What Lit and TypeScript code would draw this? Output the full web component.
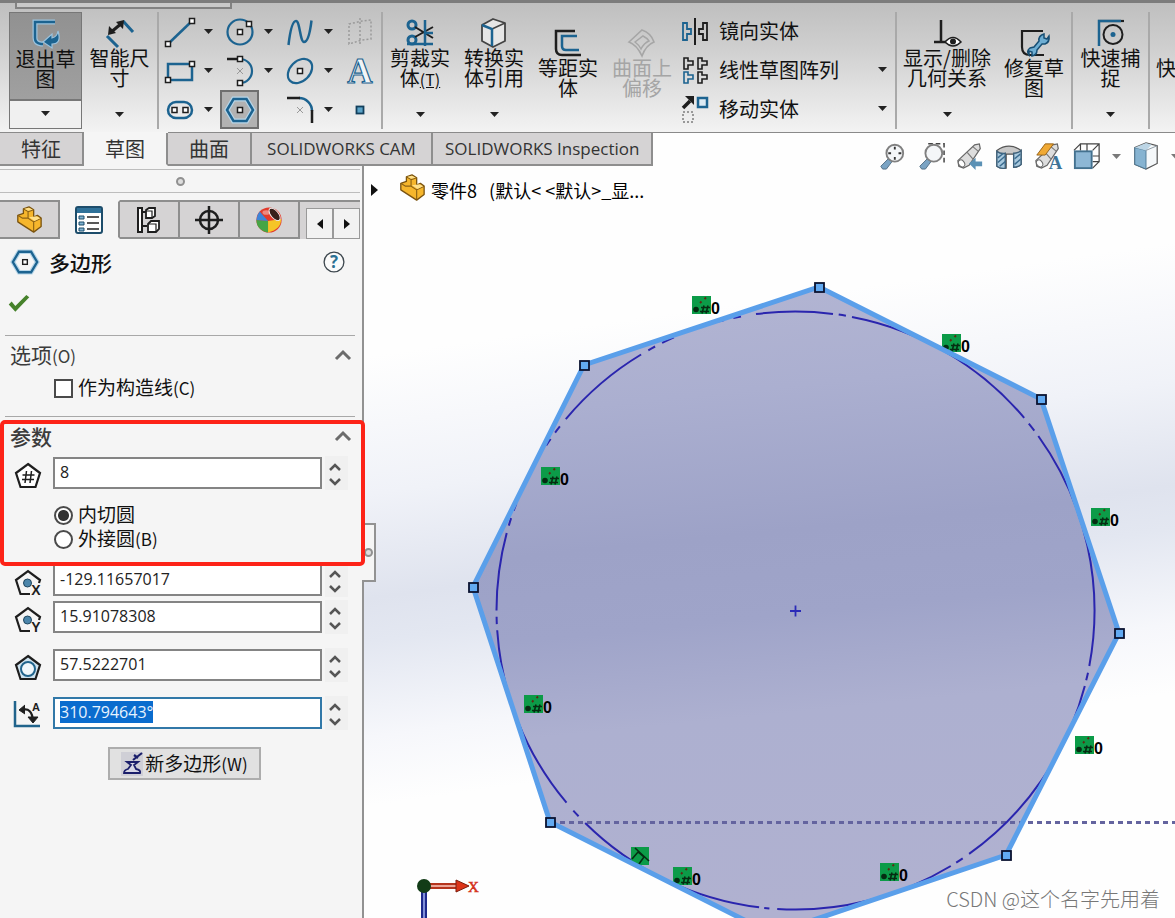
import { LitElement, html, svg, css, nothing, TemplateResult, SVGTemplateResult } from "lit";
import { customElement, state } from "lit/decorators.js";
import { classMap } from "lit/directives/class-map.js";

const BLUE = "#1c6390";
const INK = "#1e1e1e";

/** Small square grip used all over the sketch icons. */
const grip = (x: number, y: number) =>
  svg`<rect x=${x - 2.5} y=${y - 2.5} width="5" height="5" fill="#fff" stroke=${INK} stroke-width="1.5"/>`;

const cross = svg`<path d="M12 12l6 6M18 12l-6 6" stroke="#999" stroke-width="1"/>`;

/** Magnifier handle and lens shared by the zoom icons. */
const lens = svg`
  <path d="M11 18L3 26l2 3 4 0 6-8z" fill="#7ba4c4" stroke="#4f6c82"/>
  <circle cx="18" cy="12" r="9" fill="#f4f6f8" stroke="#808080" stroke-width="2"/>`;

const telescope = svg`
  <path d="M2 20L20 3l5-1 1 5-12 18-6 3-5-2z" fill="#ddd" stroke="#666" stroke-width="1.3"/>
  <path d="M12 11l6 7M18 5l6 5" stroke="#777" stroke-width="1.2"/>
  <ellipse cx="6" cy="23" rx="3" ry="4" transform="rotate(-35 6 23)" fill="#fff" stroke="#666"/>`;

const pentagon = "M14 3L26 12L21.500 26H6.500L2 12Z";

const part = svg`
  <path d="M3 10l6-2V3l6-2 5 3v8l4-2 4 3v9l-8 6L3 17z" fill="#f6b62c" stroke="#7a5310" stroke-width="1.400" stroke-linejoin="round"/>
  <path d="M9 3l5 3v7l6 4M20 4l-6 2M3 10l5 3 6 0M20 17v10M20 17l8-4" fill="none" stroke="#8b6115" stroke-width="1.200"/>
  <path d="M10 3l5-1 4 2-5 1zM15 12l6 4 6-3-4-2z" fill="#ffe08a"/>`;

const ICONS: Record<string, SVGTemplateResult> = {
  exit: svg`<path d="M24 3H4v16q0 5 6 6h2" fill="none" stroke="#9cc3de" stroke-width="5"/>
    <path d="M24 3H4v16q0 5 6 6h2" fill="none" stroke=${BLUE} stroke-width="2.500"/>
    <path d="M12 23l9-8v4q5-1 6-7 4 13-6 13v4z" fill=${BLUE} stroke="#9cc3de" stroke-width="1.200"/>`,
  dimension: svg`<path d="M18 3l10 11M2 18l11 11" stroke=${BLUE} stroke-width="3"/>
    <path d="M5 15L17 5" stroke=${INK} stroke-width="3"/>
    <path d="M3 17l1-9 7 7zM19 2l-1 9-7-7z" fill=${INK}/>`,
  line: svg`<path d="M3 27L27 4" stroke=${BLUE} stroke-width="2.500"/>${grip(3, 27)}${grip(27, 4)}`,
  rect: svg`<rect x="3" y="8" width="24" height="16" fill="none" stroke=${BLUE} stroke-width="2.500"/>${grip(27, 8)}${grip(3, 24)}`,
  slot: svg`<rect x="3" y="7" width="24" height="16" rx="8" fill="none" stroke=${BLUE} stroke-width="2.500"/>${grip(9.5, 15)}${grip(20.5, 15)}`,
  circle: svg`<circle cx="15" cy="15" r="12.500" fill="none" stroke=${BLUE} stroke-width="2.200"/>${grip(15, 15)}${grip(24, 7)}`,
  arc: svg`<path d="M15 3a12 12 0 0 1 0 24" fill="none" stroke=${BLUE} stroke-width="2.200"/>
    <path d="M2 3h11" stroke=${INK} stroke-width="2.500"/>${grip(15, 3)}${grip(15, 27)}${cross}`,
  polygon: svg`<path d="M2 15L8.500 4h13L28 15l-6.500 11h-13z" fill="none" stroke="#b6d5e8" stroke-width="5"/>
    <path d="M2 15L8.500 4h13L28 15l-6.500 11h-13z" fill="none" stroke=${BLUE} stroke-width="2.500"/>${grip(15, 15)}`,
  spline: svg`<path d="M3.500 28C5 15 7 4 11 4s4 21 8 21S25 16 26.500 3.500" fill="none" stroke=${BLUE} stroke-width="2.500"/>`,
  ellipse: svg`<ellipse cx="15" cy="15" rx="14" ry="10" transform="rotate(-45 15 15)" fill="none" stroke=${BLUE} stroke-width="2.200"/>${grip(15, 15)}`,
  fillet: svg`<path d="M14 3a13 13 0 0 1 13 13" fill="none" stroke=${BLUE} stroke-width="2.500"/>
    <path d="M2 3h13M27 15v13" stroke=${INK} stroke-width="2.500"/>${cross}`,
  plane: svg`<path d="M4 7l13-3 9-1v19l-9 1-13 4zM15 1v28" fill="none" stroke="#9a9a9a" stroke-width="1.500" stroke-dasharray="2 2"/>`,
  text: svg`<text x="15" y="27" text-anchor="middle" font-family="Liberation Serif, serif" font-size="35" font-weight="bold" fill="#f2f5f7" stroke=${BLUE} stroke-width="1.200">A</text>`,
  point: svg`<rect x="11.500" y="11.500" width="7" height="7" fill="#5ba3c8" stroke="#123f5c" stroke-width="1.800"/>`,
  trim: svg`<circle cx="7" cy="7" r="4" fill="none" stroke=${BLUE} stroke-width="3"/><circle cx="7" cy="22" r="4" fill="none" stroke=${BLUE} stroke-width="3"/>
    <path d="M10 9l18 11M10 19L28 9" stroke=${INK} stroke-width="2"/>
    <path d="M20 2v26M2 26h26M19 15h9" stroke=${BLUE} stroke-width="2.500"/>`,
  convert: svg`<path d="M3 7l11-6 12 4v18l-12 6-11-6z" fill="#e6e6e6" stroke="#444" stroke-width="1.800" stroke-linejoin="round"/>
    <path d="M13 11l13-6M13 11v18" stroke="#444" stroke-width="1.500"/><path d="M3 7l10 4v17" fill="none" stroke=${BLUE} stroke-width="2.500"/>`,
  offset: svg`<path d="M22 3H3v18q0 6 6 6h19" fill="none" stroke=${INK} stroke-width="2.500"/>
    <path d="M24 8H9v10q0 4 4 4h13" fill="none" stroke=${BLUE} stroke-width="2.500"/>`,
  surface: svg`<path d="M2 14L15 2q9 3 12 12-8 3-12 14Q10 17 2 14z" fill="none" stroke="#a6a6a6" stroke-width="1.600"/>
    <path d="M8 14l8-6q4 2 6 5-5 2-8 8-2-4-6-7z" fill="none" stroke="#a6a6a6" stroke-width="1.500"/>`,
  mirror: svg`<path d="M15 2v27" stroke=${INK} stroke-width="2"/>
    <path d="M3 7h4v6h4v5H7v6H3z" fill="none" stroke=${BLUE} stroke-width="1.800"/>
    <path d="M27 7h-4v6h-4v5h4v6h4z" fill="none" stroke=${INK} stroke-width="1.800"/>`,
  pattern: svg`<path d="M4 3h4v3h5v4H8v4H4zM18 3h4v3h5v4h-5v4h-4zM18 17h4v3h5v4h-5v4h-4z" fill="none" stroke=${INK} stroke-width="1.600"/>
    <path d="M4 17h4v3h5v4H8v4H4z" fill="none" stroke=${BLUE} stroke-width="1.600"/>`,
  move: svg`<path d="M3 14L10 7" stroke=${INK} stroke-width="3.500"/><path d="M5 2h9v9z" fill=${INK}/>
    <rect x="18" y="4" width="9" height="9" fill="#dceaf3" stroke=${BLUE} stroke-width="2.500"/>
    <rect x="3" y="18" width="10" height="10" fill="none" stroke="#999" stroke-width="2" stroke-dasharray="2 2"/>`,
  relations: svg`<path d="M9 2v22M2 24h12" stroke=${INK} stroke-width="2.500"/>
    <path d="M13 24q8-9 16 0-8 8-16 0z" fill="#fff" stroke=${INK} stroke-width="1.500"/><circle cx="21" cy="23.500" r="3" fill=${INK}/>`,
  repair: svg`<path d="M24 3H3v16q0 8 8 8h14" fill="none" stroke=${INK} stroke-width="2.200"/>
    <path d="M10 27q-3-4 1-7l4-1 5-6q-1-5 5-7l0 4 3 1 2-3q1 6-4 8l-3 0-5 6q0 5-5 6l0-4-3-1z" fill="#6eaed3" stroke="#174f74" stroke-width="1.500"/>`,
  snap: svg`<path d="M2 3h26" stroke=${INK} stroke-width="2.200"/><path d="M3 28V3h22" fill="none" stroke=${BLUE} stroke-width="2.500"/>
    <circle cx="17" cy="16.500" r="9.500" fill="none" stroke=${INK} stroke-width="2"/><circle cx="17" cy="16.500" r="2.500" fill=${BLUE}/>`,
  zoomfit: svg`${lens}<path d="M18 5v3M18 16v3M11 12h3M22 12h3" stroke="#333" stroke-width="2"/>`,
  zoomarea: svg`<path d="M12 2h17v20" fill="none" stroke="#444" stroke-width="1.600" stroke-dasharray="5 3"/>${lens}`,
  previous: svg`${telescope}<path d="M14 23l7-6v4h7v5h-7v4z" fill="#5b91b5"/>`,
  section: svg`<path d="M2 9q13-9 26 0v15q-3 3-7 3V13H12v15q-6 1-10-2z" fill="#c8c8c8" stroke="#555" stroke-width="1.300"/>
    <path d="M2 10q4 3 9 2v16q-5 1-9-2zM20 12q5 0 8-3v15q-3 3-8 3z" fill="#a9c9de" stroke="#3e617b" stroke-width="1.500"/>
    <path d="M3 17l6-5M3 22l8-7M5 26l6-5M21 18l6-5M21 24l7-6" stroke="#3c6d90" stroke-width="1.600"/>`,
  appearance: svg`${telescope}<path d="M3 14L12 2h9l-9 12z" fill="#f0a934" stroke="#93611a"/>
    <text x="23" y="29" text-anchor="middle" font-family="Liberation Serif, serif" font-size="20" font-weight="bold" fill="#3f7598">A</text>`,
  orientation: svg`<path d="M8 9V2h20v19h-7M1 9l7-7M21 9l7-7M21 28l7-7M15 2v8M21 15h7M8 9V2" fill="none" stroke="#444" stroke-width="1.300"/>
    <rect x="2" y="10" width="18" height="18" fill="#8db7d5" stroke="#43718f" stroke-width="2"/>`,
  display: svg`<path d="M3 6l12-5 12 3v19l-12 6-12-5z" fill="#f5f8fa" stroke="#555" stroke-width="1.300"/>
    <path d="M3 6l12 3v20L3 24z" fill="#86b3d1" stroke="#4d7894"/><path d="M3 6l12-5 6 2-6 6z" fill="#bcd5e5"/><path d="M15 9l12-5" stroke="#8796a1"/>`,
  property: svg`<rect x="1" y="1" width="26" height="26" rx="2" fill="#fff" stroke="#1d4d6b" stroke-width="2"/>
    <rect x="2" y="2" width="24" height="5" fill="#2f7199"/>
    <path d="M4 10h5v3H4zM4 16h5v3H4zM4 22h5v3H4z" fill="#7fb2d0" stroke="#1d4d6b"/>
    <path d="M12 11h12M12 17h12M12 23h12" stroke="#222" stroke-width="1.600"/>`,
  config: svg`<path d="M3 2h4v24H3zM7 6h5M7 20h5" fill="#fff" stroke=${INK} stroke-width="2"/>
    <path d="M11 4l3-2h6v8l-3 2h-6zM13 18l3-3h8v8l-3 3h-8z" fill="#fff" stroke=${INK} stroke-width="1.800"/><path d="M11 5h6v7M13 18h8v8" fill="none" stroke=${INK} stroke-width="1.200"/>`,
  target: svg`<circle cx="14" cy="14" r="9" fill="none" stroke=${INK} stroke-width="2.500"/><path d="M14 0v28M0 14h28" stroke=${INK} stroke-width="2.500"/>`,
  ball: svg`<circle cx="15" cy="15" r="13.500" fill="#e23a2c"/>
    <path d="M1.500 15l12.500 1v12.500A13.500 13.500 0 0 1 1.500 15z" fill="#46a545"/><path d="M14 16l14-2q0 11-14 14.500z" fill="#f5c527"/>
    <path d="M1.500 15q0-5 3.500-9l9 10z" fill="#3d84d8"/>
    <ellipse cx="21" cy="9" rx="4" ry="8" transform="rotate(-40 21 9)" fill="#37201b" stroke="#eee"/>
    <ellipse cx="12" cy="7" rx="4" ry="2.500" fill="#fff" opacity=".4"/>`,
  part,
  help: svg`<circle cx="15" cy="15" r="13.500" fill="#fafafa" stroke="#3d474e" stroke-width="1.800"/>
    <text x="15" y="23" text-anchor="middle" font-family="Open Sans, sans-serif" font-size="23" font-weight="bold" fill="#2a7093">?</text>`,
  check: svg`<path d="M1 17l4-4 5 6L25 4l4 3-19 20z" fill="#46822b"/>`,
  sides: svg`<path d=${pentagon} fill="#fff" stroke=${INK} stroke-width="2.200"/>
    <path d="M12.500 10l-1.500 12M17.500 10l-1.500 12M8.500 14h12M8 18.500h12" stroke=${INK} stroke-width="1.500"/>`,
  centerX: svg`<path d="M16 26H6.500L2 12 14 3l12 9-1 3" fill="none" stroke=${INK} stroke-width="2.200"/><circle cx="13.500" cy="15" r="4" fill="#4c86ab" stroke="#20465f"/>
    <text x="22" y="27" text-anchor="middle" font-family="Liberation Sans, sans-serif" font-size="14" font-weight="bold" fill=${INK}>X</text>`,
  centerY: svg`<path d="M16 26H6.500L2 12 14 3l12 9-1 3" fill="none" stroke=${INK} stroke-width="2.200"/><circle cx="13.500" cy="15" r="4" fill="#4c86ab" stroke="#20465f"/>
    <text x="22" y="27" text-anchor="middle" font-family="Liberation Sans, sans-serif" font-size="14" font-weight="bold" fill=${INK}>Y</text>`,
  radius: svg`<path d=${pentagon} fill="#cfe3ef" stroke=${INK} stroke-width="2.200"/><circle cx="14" cy="16" r="7" fill="#f0f7fb" stroke="#21648c" stroke-width="2"/>`,
  angle: svg`<path d="M1 0v25h25" fill="none" stroke="#21648c" stroke-width="2.500"/>
    <path d="M8 9q10-3 11 11" fill="none" stroke=${INK} stroke-width="2.200"/><path d="M11 4L5 9l6 4M14 16l5 6 5-6z" fill=${INK} stroke=${INK}/>
    <text x="22" y="10" text-anchor="middle" font-family="Liberation Sans, sans-serif" font-size="11" font-weight="bold" fill=${INK}>A</text>`,
};

const icon = (name: string, cls = "i30", box = 30) =>
  html`<svg class=${cls} viewBox="0 0 ${box} ${box}" fill="none" aria-hidden="true">${ICONS[name]}</svg>`;

const caret = html`<svg class="caret" viewBox="0 0 9 5" aria-hidden="true"><path d="M0 0h9L4.500 5z" fill="currentColor"/></svg>`;

const CX = 795.5;
const CY = 610.5;
const R = 299;

/** Visible runs of the chain line, in degrees clockwise from the top. */
const RUNS: [number, number][] = [
  [-7.6, 7.2], [8.3, 9.7], [10.9, 49.9], [51.3, 53], [54.3, 100.7], [102, 103.5], [104.6, 144.5],
  [146, 147.5], [148.7, 183.5], [185, 186], [187, 224.7], [226.5, 228], [230, 266.2], [267.4, 268.8],
  [270, 285], [286.5, 288], [289.5, 291], [303.5, 305], [306.5, 308], [309.8, 328.9], [330.5, 332],
  [333.5, 336], [345.2, 346.2], [348, 349.5],
];

const onCircle = (deg: number) => {
  const a = (deg * Math.PI) / 180;
  return `${(CX + R * Math.sin(a)).toFixed(1)} ${(CY - R * Math.cos(a)).toFixed(1)}`;
};

const VERTICES: [number, number][] = [
  [819, 287], [1041, 399], [1119, 633], [1006, 855], [772, 934], [550, 822], [473, 587], [584, 365],
];

const RELATIONS: [number, number][] = [
  [692, 296], [942, 334], [541, 467], [1091, 508], [524, 695], [1075, 736], [880, 863], [673, 867],
];

interface Field {
  id: string;
  icon: string;
  label: string;
}

@customElement("app-root")
export class AppRoot extends LitElement {
  @state() private values: Record<string, string> = {
    sides: "8", cx: "-129.11657017", cy: "15.91078308", dia: "57.5222701", angle: "310.794643°",
  };

  static styles = css`
    :host {
      display: flex;
      flex-direction: column;
      height: 100vh;
      overflow: hidden;
      background: #fefefe;
      color: #111;
      font-family: "Open Sans", "Noto Sans CJK SC", sans-serif;
      font-size: 20px;
      line-height: 20px;
    }
    * { box-sizing: border-box; }
    button { font: inherit; color: inherit; background: none; border: 0; padding: 0; margin: 0; cursor: pointer; }
    svg { display: block; flex: none; overflow: visible; }
    .i28 { width: 28px; height: 28px; }
    .i30 { width: 30px; height: 30px; }
    .i22 { width: 22px; height: 22px; }
    .caret { width: 9px; height: 5px; color: #222; }

    .ribbon {
      position: relative;
      display: flex;
      flex: none;
      height: 133px;
      padding: 9px 0 3px 9px;
      border-top: 3px solid #7c7c7c;
      border-bottom: 1px solid #8a8a8a;
      background: linear-gradient(#bfbfbf, #cfcfcf 35%, #f3f3f3);
      overflow: hidden;
      font-family: "Noto Sans CJK SC", sans-serif;
    }
    .flyout {
      position: absolute;
      left: 15px;
      top: -3px;
      width: 217px;
      height: 9px;
      border: solid #828282;
      border-width: 0 2px 2px;
      background: #c9c9c9;
    }
    .big {
      display: flex;
      flex: none;
      flex-direction: column;
      align-items: center;
      width: 74px;
      height: 117px;
      padding-top: 6px;
      line-height: 20px;
    }
    .big .lbl { flex: 1; text-align: center; white-space: pre-line; }
    .big .drop { display: flex; align-items: center; height: 30px; }
    .big.plain { padding-top: 16px; }
    .big.off { color: #a5a5a5; }
    .big.wide { width: 100px; }
    .big.narrow { width: 75px; }
    .big.on { width: 73px; border: 1px solid #777; background: linear-gradient(#919191, #a0a0a0 86px, #777 86px, #777 88px, #f0f0f0 88px); }
    .big.cut { width: 92px; padding-top: 46px; }
    .big.cut .lbl { white-space: nowrap; }
    kbd { font: inherit; font-size: 16px; text-decoration: underline; }
    .sep { flex: none; width: 2px; height: 117px; background: #a9a9a9; }
    .tools { display: grid; grid-template-columns: repeat(3, 60px) 40px; grid-auto-rows: 39px; flex: none; margin-left: 1px; margin-right: 1px; }
    .tool { display: flex; align-items: center; gap: 4px; }
    .tool button { display: flex; align-items: center; justify-content: center; height: 39px; }
    .tool .face { width: 39px; }
    .tool .more { width: 11px; }
    .tool .face.on { border: 2px solid #6f6f6f; background: #b2b2b2; }
    .ops { display: grid; grid-auto-rows: 39px; flex: none; width: 216px; }
    .op { display: flex; align-items: center; justify-content: space-between; padding: 0 8px 0 1px; }
    .op button { display: flex; align-items: center; gap: 9px; height: 39px; padding-bottom: 2px; }

    .strip { position: relative; z-index: 1; display: flex; flex: none; justify-content: space-between; height: 33px; }
    .tabs { display: flex; }
    .tab {
      min-width: 84px;
      height: 33px;
      padding: 0 12px;
      border: solid #8e8e8e;
      border-width: 0 2px 2px 0;
      background: #d5d3d4;
      color: #333;
      font-size: 17px;
      white-space: nowrap;
    }
    .tab.long { min-width: 181px; }
    .tab.cjk { font-family: "Noto Sans CJK SC", sans-serif; font-size: 20px; }
    .tab.on { background: #f5f5f5; border-bottom-color: #f5f5f5; box-shadow: 0 -1px #f5f5f5; }
    .view { display: flex; align-items: center; gap: 11px; height: 46px; overflow: visible; }
    .view button { display: flex; }
    .view .more { width: 9px; opacity: 0.6; }
    .view .more.last { width: 4px; overflow: hidden; }

    .body { display: flex; flex: 1; min-height: 0; }
    .panel { position: relative; z-index: 1; flex: none; width: 364px; background: #f5f5f5; border-right: 2px solid #929292; }
    .pull { display: flex; align-items: center; justify-content: center; height: 24px; margin: 3px 2px 0 0; border: solid #bdbdbd; border-width: 1px 0; }
    .dot { width: 9px; height: 9px; border: 2px solid #909090; border-radius: 50%; background: #ddd; }
    .ptabs { display: flex; height: 39px; margin: 7px 2px 0 0; }
    .ptab { display: flex; flex: 1; align-items: center; justify-content: center; border: solid #8e8e8e; border-width: 2px 2px 2px 0; background: #d5d3d4; }
    .ptab.on { background: #f5f5f5; border-color: #f5f5f5 #8e8e8e #f5f5f5 #f5f5f5; }
    .scroll { display: flex; flex: none; width: 60px; padding: 6px 0 0 6px; border-top: 2px solid #8e8e8e; background: #d5d3d4; }
    .scroll button { display: flex; flex: 1; align-items: center; justify-content: center; border: 1px solid #999; background: #f2f2f2; }
    .title { display: flex; align-items: center; gap: 10px; height: 46px; padding: 0 17px 0 11px; }
    h1, h2 { margin: 0; font-family: "Noto Sans CJK SC", sans-serif; }
    h1 { flex: 1; font-size: 21px; font-weight: 500; }
    .ok { display: flex; align-items: center; height: 36px; padding-left: 8px; }
    .sect { margin: 14px 7px 0 5px; border-top: 1px solid #a8a8a8; }
    .sect.second { margin-top: 16px; }
    .head { display: flex; align-items: center; justify-content: space-between; height: 40px; padding: 0 4px 2px 5px; color: #3c3c3c; }
    h2 { font-size: 21px; font-weight: 400; }
    h2.strong { font-weight: 500; }
    small { font-family: "Noto Sans CJK SC", sans-serif; font-size: 17px; }
    .pick { display: flex; align-items: center; gap: 5px; height: 24px; padding-left: 49px; }
    .pick label { padding-bottom: 2px; font-family: "Noto Sans CJK SC", sans-serif; font-size: 19px; }
    .pick input { appearance: none; width: 19px; height: 19px; margin: 0; border: 2px solid #4a4a4a; background: #fff; }
    .pick input[type="radio"] { border-radius: 50%; }
    .pick input[type="radio"]:checked { background: radial-gradient(circle, #333 5px, #fff 6px); }
    .radios { margin-top: 14px; }
    .frame { position: relative; }
    .callout { position: absolute; inset: 3px -10px -15px -5px; border: 4px solid #fd2318; border-radius: 5px; z-index: 2; pointer-events: none; }
    .field { display: flex; align-items: center; height: 32px; padding: 0 7px 0 9px; }
    .field .i28 { margin: 4px 11px 0 0; }
    .field input {
      flex: 1;
      min-width: 0;
      height: 32px;
      padding: 0 5px 2px;
      border: 2px solid #848484;
      background: #fff;
      color: #222;
      font: 16px "Open Sans", sans-serif;
      outline: none;
    }
    .field input.hot { border-color: #3178a8; }
    .field input::selection { background: #0a6cce; color: #e6f3ff; }
    .spin { display: flex; flex-direction: column; width: 23px; height: 34px; margin-left: 3px; padding: 3px 7px 0 3px; background: #f0f0f0; }
    .spin button { display: flex; flex: 1; align-items: center; justify-content: center; }
    .gap5 { margin-top: 5px; }
    .gap13 { margin-top: 13px; }
    .gap16 { margin-top: 16px; }
    .new { display: flex; align-items: center; justify-content: center; gap: 2px; width: 153px; height: 33px; margin: 18px 0 0 108px; border: 2px solid #adadad; background: #e1e1e1; font-family: "Noto Sans CJK SC", sans-serif; font-size: 19px; }
    .tear { position: absolute; left: 362px; top: 357px; display: flex; align-items: center; width: 14px; height: 59px; padding-left: 2px; border: 2px solid #929292; border-left: 0; background: #f5f5f5; }

    .scene {
      position: relative;
      flex: 1;
      min-width: 0;
      overflow: hidden;
      background: linear-gradient(172deg, #fefefe 22%, #f0f2f8 38%, #dfe3ee 50%, #e3e7f1 55%, #f6f7fb 66%, #fefefe 74%);
    }
    .canvas { position: absolute; inset: 0; width: 100%; height: 100%; overflow: hidden; }
    .tree { position: relative; display: flex; align-items: center; height: 30px; margin-top: 9px; padding-left: 7px; font-family: "Noto Sans CJK SC", sans-serif; font-size: 18px; color: #000; white-space: pre; }
    .tree .i28 { margin: 0 5px 4px 20px; }
    .mark { position: absolute; right: 15px; bottom: 7px; font-family: "Noto Sans CJK SC", sans-serif; font-size: 20px; line-height: 24px; font-weight: 300; color: #777; }
  `;

  firstUpdated() {
    const el = this.renderRoot.querySelector<HTMLInputElement>("#angle");
    el?.focus();
    el?.select();
  }

  private big(name: string, label: string | TemplateResult, cls = "", drop = true) {
    return html`<button class="big ${cls}" ?disabled=${cls.includes("off")}>
      ${name ? icon(name) : nothing}<span class="lbl">${label}</span>
      ${drop ? html`<span class="drop">${caret}</span>` : nothing}
    </button>`;
  }

  private tool(name: string, label: string, more = true, on = false) {
    return html`<div class="tool">
      <button class=${classMap({ face: true, on })} aria-label=${label}>${icon(name)}</button>
      ${more ? html`<button class="more" aria-label="${label} ▾">${caret}</button>` : nothing}
    </div>`;
  }

  private op(name: string, label: string, more: boolean) {
    return html`<div class="op">
      <button>${icon(name)}<span>${label}</span></button>
      ${more ? html`<button aria-label="${label} ▾">${caret}</button>` : nothing}
    </div>`;
  }

  private step(id: string, by: number) {
    const unit = this.values[id].endsWith("°") ? "°" : "";
    this.values = { ...this.values, [id]: `${parseFloat(this.values[id]) + by}${unit}` };
  }

  private field(f: Field, cls = "") {
    return html`<div class="field ${cls}">
      <label for=${f.id} aria-label=${f.label}>${icon(f.icon, "i28", 28)}</label>
      <input id=${f.id} type="text" class=${f.id === "angle" ? "hot" : ""} aria-label=${f.label} .value=${this.values[f.id]} />
      <span class="spin">
        <button aria-label="+" @click=${() => this.step(f.id, 1)}><svg width="12" height="8" fill="none"><path d="M1 7l5-5 5 5" stroke="#555" stroke-width="2.500"/></svg></button>
        <button aria-label="-" @click=${() => this.step(f.id, -1)}><svg width="12" height="8" fill="none"><path d="M1 1l5 5 5-5" stroke="#555" stroke-width="2.500"/></svg></button>
      </span>
    </div>`;
  }

  private head(label: string | TemplateResult, strong = false) {
    return html`<div class="head"><h2 class=${strong ? "strong" : ""}>${label}</h2>
      <button aria-label="▴"><svg width="16" height="10" fill="none"><path d="M1 9l7-7 7 7" stroke="#6c6c6c" stroke-width="3"/></svg></button></div>`;
  }

  private renderRibbon() {
    return html`<header class="ribbon">
      <div class="flyout"></div>
      ${this.big("exit", "退出草\n图", "on")}
      ${this.big("dimension", "智能尺\n寸", "narrow")}
      <div class="sep"></div>
      <div class="tools">
        ${this.tool("line", "直线")}${this.tool("circle", "圆")}${this.tool("spline", "样条曲线")}${this.tool("plane", "平面", false)}
        ${this.tool("rect", "矩形")}${this.tool("arc", "圆弧")}${this.tool("ellipse", "椭圆")}${this.tool("text", "文字", false)}
        ${this.tool("slot", "槽口")}${this.tool("polygon", "多边形", false, true)}${this.tool("fillet", "圆角")}${this.tool("point", "点", false)}
      </div>
      <div class="sep"></div>
      ${this.big("trim", html`剪裁实<br />体<kbd>(T)</kbd>`)}
      ${this.big("convert", "转换实\n体引用")}
      ${this.big("offset", "等距实\n体", "plain", false)}
      ${this.big("surface", "曲面上\n偏移", "plain off", false)}
      <div class="ops">${this.op("mirror", "镜向实体", false)}${this.op("pattern", "线性草图阵列", true)}${this.op("move", "移动实体", true)}</div>
      <div class="sep"></div>
      ${this.big("relations", "显示/删除\n几何关系", "wide")}
      ${this.big("repair", "修复草\n图", "plain", false)}
      <div class="sep"></div>
      ${this.big("snap", "快速捕\n捉", "narrow")}
      <div class="sep"></div>
      ${this.big("", "快速草图", "cut", false)}
    </header>`;
  }

  private renderStrip() {
    const views: [string, string][] = [
      ["zoomfit", "整屏显示全图"], ["zoomarea", "局部放大"], ["previous", "上一视图"], ["section", "剖面视图"],
      ["appearance", "动态注解视图"], ["orientation", "视图定向"],
    ];
    return html`<div class="strip">
      <nav class="tabs">
        <button class="tab cjk">特征</button><button class="tab cjk on">草图</button><button class="tab cjk">曲面</button>
        <button class="tab long">SOLIDWORKS CAM</button><button class="tab long">SOLIDWORKS Inspection</button>
      </nav>
      <div class="view">
        ${views.map(([n, l]) => html`<button aria-label=${l}>${icon(n, "i28")}</button>`)}
        <button class="more" aria-label="视图定向 ▾">${caret}</button>
        <button aria-label="显示样式">${icon("display", "i28")}</button>
        <button class="more last" aria-label="显示样式 ▾">${caret}</button>
      </div>
    </div>`;
  }

  private renderPanel() {
    return html`<aside class="panel">
      <div class="tear"><span class="dot"></span></div>
      <div class="pull"><span class="dot"></span></div>
      <div class="ptabs">
        ${["part", "property", "config", "target", "ball"].map(
          (n) => html`<button class=${classMap({ ptab: true, on: n === "property" })} aria-label=${n}>${icon(n, "i28", n === "part" || n === "ball" ? 30 : 28)}</button>`,
        )}
        <span class="scroll">
          <button aria-label="◂"><svg width="6" height="10"><path d="M6 0v10L0 5z" fill="#111"/></svg></button>
          <button aria-label="▸"><svg width="6" height="10"><path d="M0 0v10l6-5z" fill="#111"/></svg></button>
        </span>
      </div>
      <div class="title">${icon("polygon", "i28")}<h1>多边形</h1><button aria-label="?">${icon("help", "i22")}</button></div>
      <div class="ok"><button aria-label="OK">${icon("check", "i22")}</button></div>
      <section class="sect">
        ${this.head(html`选项<small>(O)</small>`)}
        <div class="pick"><input type="checkbox" id="construction" /><label for="construction">作为构造线<small>(C)</small></label></div>
      </section>
      <section class="sect second">
        <div class="frame">
          ${this.head("参数", true)}
          ${this.field({ id: "sides", icon: "sides", label: "边数" })}
          <div class="radios">
            <div class="pick"><input type="radio" name="mode" id="inscribed" checked /><label for="inscribed">内切圆</label></div>
            <div class="pick"><input type="radio" name="mode" id="circumscribed" /><label for="circumscribed">外接圆<small>(B)</small></label></div>
          </div>
          <div class="callout"></div>
        </div>
        ${this.field({ id: "cx", icon: "centerX", label: "X" }, "gap13")}
        ${this.field({ id: "cy", icon: "centerY", label: "Y" }, "gap5")}
        ${this.field({ id: "dia", icon: "radius", label: "直径" }, "gap16")}
        ${this.field({ id: "angle", icon: "angle", label: "角度" }, "gap16")}
      </section>
      <button class="new">
        <svg width="22" height="24" viewBox="0 0 22 24" fill="none"><rect width="22" height="24" fill="#cfcfd6"/>
          <path d="M3 21q0-3 4-4l3-4-4-3h11l-4 3 2 4q5 1 4 4z" fill="#d8d8e6" stroke="#1b1f6b" stroke-width="1.800"/><path d="M12 8l9-7M13 3l4 3" stroke="#1b1f6b" stroke-width="2.200"/></svg>
        <span>新多边形<small>(W)</small></span>
      </button>
    </aside>`;
  }

  private renderScene() {
    const outline = VERTICES.map((v) => v.join(",")).join(" ");
    const badge = (x: number, y: number) => svg`<g transform="translate(${x} ${y})">
      <rect width="19" height="18" fill="#0c9b48"/><circle cx="4" cy="13.500" r="2.800" fill="#052c12"/>
      <path d="M9 11.500h9M8 15.500h9M12 9.500l-2 8M16 9.500l-2 8" stroke="#052c12" stroke-width="1.600"/>
      <path d="M8 7l1.500-1.500M12.500 3L14 1.500" stroke="#5c2a12" stroke-width="1.800"/>
      <text x="19" y="18" font-family="Liberation Sans Narrow, Liberation Sans, sans-serif" font-weight="bold" font-size="16" fill="#000">0</text></g>`;
    return html`<main class="scene">
      <svg class="canvas" fill="none" aria-hidden="true">
        <defs><linearGradient id="face" x1="0" y1="0" x2="0.1" y2="1">
          <stop offset="0" stop-color="#b4b6d3"/><stop offset=".2" stop-color="#abafd0"/><stop offset=".42" stop-color="#9da2c7"/>
          <stop offset=".55" stop-color="#9fa4c9"/><stop offset=".7" stop-color="#adb0d0"/><stop offset="1" stop-color="#b0b1d0"/>
        </linearGradient></defs>
        <g transform="translate(-364 -166)">
          <polygon points=${outline} fill="url(#face)"/>
          <path d="M560 822.500H1175" stroke="#64649f" stroke-width="3" stroke-dasharray="5 4"/>
          ${RUNS.map(([a, b]) => svg`<path d="M${onCircle(a)}A${R} ${R} 0 0 1 ${onCircle(b)}" stroke="#2a25ae" stroke-width="2"/>`)}
          ${RELATIONS.map(([x, y]) => badge(x, y))}
          <g transform="translate(631 847)"><rect width="18" height="18" fill="#0c9b48"/><path d="M4 1l14 13M1 12l6-7 6 5-5 7" stroke="#052c12" stroke-width="1.600"/></g>
          <polygon points=${outline} stroke="#5a9fea" stroke-width="5"/>
          ${VERTICES.map(([x, y]) => svg`<rect x=${x - 4} y=${y - 4} width="9" height="9" fill="#62aaf2" stroke="#0b1230" stroke-width="1.800"/>`)}
          <path d="M790 611h11M795.500 605.500v11" stroke="#2a2ab8" stroke-width="1.800"/>
          <path d="M424 890v30" stroke="#1d2a8c" stroke-width="6"/><path d="M424 890v30" stroke="#8c9be0" stroke-width="1.800"/>
          <path d="M430 886h28" stroke="#b5341d" stroke-width="6"/><path d="M430 886h28" stroke="#f2b2a4" stroke-width="1.800"/>
          <path d="M456 880l13 6-13 6z" fill="#dc3418" stroke="#7c1d0d"/><circle cx="424" cy="886" r="7" fill="#123c17"/>
          <text x="468" y="892" font-family="Liberation Serif, serif" font-size="15" fill="#d5311a" stroke="#d5311a" stroke-width=".5">X</text>
        </g>
      </svg>
      <div class="tree"><svg width="7" height="12"><path d="M0 0v12l7-6z" fill="#111"/></svg>${icon("part", "i28")}<span>零件8   (默认&lt; &lt;默认&gt;_显...</span></div>
      <div class="mark">CSDN @这个名字先用着</div>
    </main>`;
  }

  render() {
    return html`${this.renderRibbon()}${this.renderStrip()}<div class="body">${this.renderPanel()}${this.renderScene()}</div>`;
  }
}
